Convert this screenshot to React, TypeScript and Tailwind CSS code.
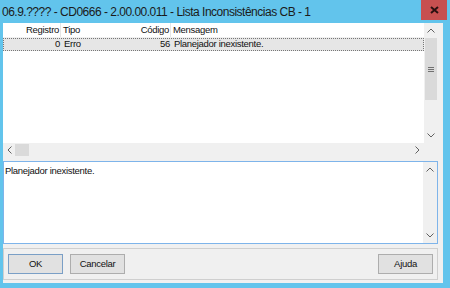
import React from "react";

const Up = () => (
  <svg width="8" height="5" viewBox="0 0 8 5"><path d="M0.5 4.5 L4 1 L7.5 4.5" fill="none" stroke="#606060" strokeWidth="1" /></svg>
);
const Down = () => (
  <svg width="8" height="5" viewBox="0 0 8 5"><path d="M0.5 0.5 L4 4 L7.5 0.5" fill="none" stroke="#606060" strokeWidth="1" /></svg>
);
const Left = () => (
  <svg width="5" height="8" viewBox="0 0 5 8"><path d="M4.5 0.5 L1 4 L4.5 7.5" fill="none" stroke="#606060" strokeWidth="1" /></svg>
);
const Right = () => (
  <svg width="5" height="8" viewBox="0 0 5 8"><path d="M0.5 0.5 L4 4 L0.5 7.5" fill="none" stroke="#606060" strokeWidth="1" /></svg>
);

const listFont = { fontFamily: '"Liberation Sans", Arial, sans-serif' };

export default function App() {
  return (
    <div className="w-[450px] h-[288px] bg-[#62c4ec] flex flex-col overflow-hidden" style={listFont}>
      {/* title bar */}
      <div className="h-[23px] flex justify-between">
        <div className="pl-[2px] pt-[5px] text-[12px] leading-[15px] tracking-[-0.5px] text-[#1b1b1b] whitespace-nowrap">
          06.9.???? - CD0666 - 2.00.00.011 - Lista Inconsistências CB - 1
        </div>
        <div className="w-[26px] h-[20px] mr-[3px] bg-[#c75050] flex items-center justify-center">
          <svg width="9" height="8" viewBox="0 0 9 8">
            <path d="M1 1 L8 7 M8 1 L1 7" stroke="#2a1010" strokeWidth="2" />
          </svg>
        </div>
      </div>

      {/* client */}
      <div className="flex-1 ml-[3px] mr-[7px] mb-[5px] bg-[#f0f0f0] flex flex-col text-[9.5px] tracking-[-0.3px] text-[#111]">
        {/* grid */}
        <div className="h-[134px] mr-[5px] bg-white flex flex-col">
          <div className="flex-1 flex min-h-0">
            <div className="flex-1 flex flex-col">
              <div className="h-[15px] flex items-center border-b border-[#f0f0f0]">
                <div className="w-[58px] text-right pr-[1px] border-r border-[#e5e5e5]">Registro</div>
                <div className="w-[68px] pl-[2px]">Tipo</div>
                <div className="w-[42px] text-right pr-[1px] border-r border-[#e5e5e5]">Código</div>
                <div className="pl-[2px]">Mensagem</div>
              </div>
              <div className="h-[13px] flex items-center bg-[#e6e6e6] border border-dotted border-[#777]">
                <div className="w-[57px] text-right pr-[1px]">0</div>
                <div className="w-[68px] pl-[3px]">Erro</div>
                <div className="w-[42px] text-right pr-[1px]">56</div>
                <div className="pl-[3px]">Planejador inexistente.</div>
              </div>
            </div>
            {/* vertical scrollbar */}
            <div className="w-[14px] bg-[#f0f0f0] flex flex-col">
              <div className="h-[15px] flex items-center justify-center"><Up /></div>
              <div className="h-[62px] mx-[1px] bg-[#dadada] flex items-center justify-center">
                <svg width="6" height="5" viewBox="0 0 6 5"><path d="M0 0.5 H6 M0 2.5 H6 M0 4.5 H6" stroke="#707070" strokeWidth="1" /></svg>
              </div>
              <div className="flex-1" />
              <div className="h-[15px] flex items-center justify-center"><Down /></div>
            </div>
          </div>
          {/* horizontal scrollbar */}
          <div className="h-[14px] flex bg-[#f0f0f0]">
            <div className="w-[12px] flex items-center justify-center"><Left /></div>
            <div className="w-[14px] my-[1px] bg-[#dadada]" />
            <div className="flex-1" />
            <div className="w-[14px] flex items-center justify-center"><Right /></div>
            <div className="w-[14px] bg-[#f0f0f0]" />
          </div>
        </div>

        {/* memo */}
        <div className="h-[83px] mt-[4px] mr-[5px] bg-white border border-[#7eb4ea] flex">
          <div className="flex-1 pl-[1px] pt-[2px]">Planejador inexistente.</div>
          <div className="w-[14px] bg-[#f0f0f0] flex flex-col">
            <div className="h-[15px] flex items-center justify-center"><Up /></div>
            <div className="flex-1" />
            <div className="h-[15px] flex items-center justify-center"><Down /></div>
          </div>
        </div>

        {/* buttons */}
        <div className="h-[32px] mt-[4px] mr-[5px] border border-[#cfcfcf] bg-[#f0f0f0] flex items-center px-[4px]">
          <button className="w-[55px] h-[20px] border border-[#7a9fc6] bg-[#e1e1e1]">OK</button>
          <button className="w-[55px] h-[20px] ml-[7px] border border-[#adadad] bg-[#e1e1e1]">Cancelar</button>
          <div className="flex-1" />
          <button className="w-[55px] h-[20px] border border-[#adadad] bg-[#e1e1e1]">Ajuda</button>
        </div>
      </div>
    </div>
  );
}
